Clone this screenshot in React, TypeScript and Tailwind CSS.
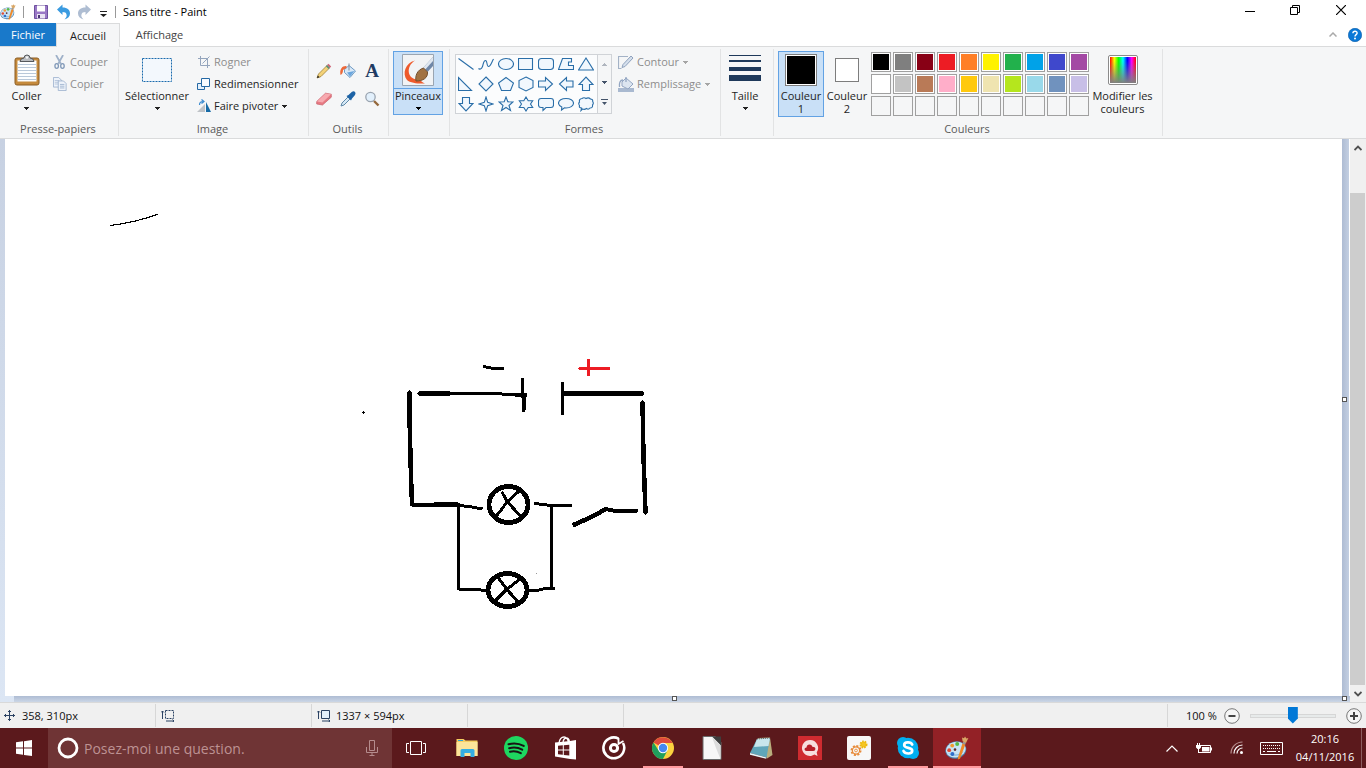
import React from "react";

type SvgProps = { children: React.ReactNode; box?: string; className?: string };

function Svg({ children, box = "0 0 16 16", className = "size-4" }: SvgProps) {
  return (
    <svg viewBox={box} className={`block shrink-0 ${className}`} fill="none" aria-hidden="true">
      {children}
    </svg>
  );
}

function Caret({ className = "text-[#222]" }: { className?: string }) {
  return (
    <Svg box="0 0 5 3" className={`h-[3px] w-[5px] ${className}`}>
      <path d="M0 0h5v1H4v1H3v1H2V2H1V1H0z" fill="currentColor" />
    </Svg>
  );
}

function Palette({ className }: { className: string }) {
  return (
    <Svg box="0 0 24 24" className={className}>
      <ellipse cx="10.8" cy="14" rx="10.6" ry="8.6" transform="rotate(-12 10.8 14)" fill="#4a7fa8" />
      <ellipse cx="10.8" cy="13.6" rx="9.9" ry="7.8" transform="rotate(-12 10.8 13.6)" fill="#c8e3f5" />
      <path d="M3 17c4 4 12 4 16-2-3 3-9 5-16 2z" fill="#85b9dd" />
      <circle cx="4.2" cy="14.2" r="1.9" fill="#e04a35" />
      <circle cx="7.2" cy="9.6" r="1.9" fill="#f29a2e" />
      <circle cx="12.2" cy="8" r="2" fill="#58b947" />
      <circle cx="7.4" cy="18" r="2" fill="#2f6fcb" />
      <circle cx="10" cy="13.6" r="1.3" fill="#5f2a2c" />
      <path d="M17.4 7.6l3 1-5.4 14.2-2.200.8.2-2.200z" fill="#ee8a2a" />
      <path d="M17.4 7.600l.8-2.200 2.800 1.200-.9 2.200z" fill="#9a9a9a" />
      <path d="M17.600 5.200l-.6-3.600 2 .6 1-1.800 1.400 2 2-.4-2.400 5z" fill="#d9a766" />
    </Svg>
  );
}

function Group({ label, width, children }: { label?: string; width: string; children: React.ReactNode }) {
  return (
    <section className={`flex h-[87px] shrink-0 flex-col border-r border-[#e2e3e4] ${width}`}>
      <div className="flex flex-1 items-start pt-[2px]">{children}</div>
      <h2 className="h-[14px] pr-[2px] text-center leading-[14px] text-[#5a5a5a]">{label}</h2>
    </section>
  );
}

function SmallButton({ icon, label, off, caret }: { icon: React.ReactNode; label: string; off?: boolean; caret?: boolean }) {
  return (
    <button
      type="button"
      disabled={off}
      className={`flex h-[22px] items-center gap-[3px] whitespace-nowrap ${off ? "text-[#8d8d8d]" : "text-[#1e1e1e]"}`}
    >
      {icon}
      <span>{label}</span>
      {caret && <Caret className={off ? "ml-px text-[#a5a5a5]" : "ml-px text-[#222]"} />}
    </button>
  );
}

function BigButton({ icon, label, width, caret }: { icon: React.ReactNode; label: string; width: string; caret?: boolean }) {
  return (
    <button type="button" className={`flex shrink-0 flex-col items-center text-[#1e1e1e] ${width}`}>
      <span className="flex h-[38px] items-center">{icon}</span>
      <span className="leading-[13px]">{label}</span>
      {caret && <Caret className="mt-[5px] text-[#222]" />}
    </button>
  );
}

const shapes: { name: string; d: string }[] = [
  { name: "Ligne", d: "M.5 2.5l15 11" },
  { name: "Courbe", d: "M.5 12.5c1 1 3 1 4-2s1-6 3-6 1 6 3 6 3-4 5-7.5" },
  { name: "Ellipse", d: "M8 2.5c4.2 0 7.5 2.5 7.5 5.5S12.2 13.5 8 13.5.5 11 .5 8 3.8 2.5 8 2.5z" },
  { name: "Rectangle", d: "M.5 2.5h14v11H.5z" },
  { name: "Rectangle arrondi", d: "M3.5 2.5h9q3 0 3 3v5q0 3-3 3h-9q-3 0-3-3v-5q0-3 3-3z" },
  { name: "Polygone", d: "M4.5 2.5h9v3.500h-3v3.500h5v4H.500z" },
  { name: "Triangle", d: "M8 2l7.5 12H.5z" },
  { name: "Triangle rectangle", d: "M.5 1.5v13h13z" },
  { name: "Losange", d: "M8 1l7 7-7 7-7-7z" },
  { name: "Pentagone", d: "M8 1.5l7.5 5.5-3 7.500h-9L.5 7z" },
  { name: "Hexagone", d: "M8 1l7 3.5v7L8 15l-7-3.5v-7z" },
  { name: "Flèche droite", d: "M.5 5h7V1.500L14.5 8l-7 6.5V11h-7z" },
  { name: "Flèche gauche", d: "M15 5H8.5V1.5L1.5 8l7 6.5V11H15z" },
  { name: "Flèche haut", d: "M4.500 14.5V8.5H1L8 1l7 7.500h-3.500v6z" },
  { name: "Flèche bas", d: "M4.500 1.5v6H1L8 15l7-7.500h-3.500v-6z" },
  { name: "Étoile à 4 branches", d: "M8 1l1.7 5.3L15 8 9.7 9.7 8 15 6.3 9.7 1 8l5.3-1.700z" },
  { name: "Étoile à 5 branches", d: "M8 1l1.8 4.8 5.2.2-4 3.5 1.5 5L8 11.5l-4.500 3 1.5-5L1 6l5.200-.2z" },
  { name: "Étoile à 6 branches", d: "M8 1l2.2 3.7h4.500L12.5 8l2.2 3.5h-4.500L8 15l-2.200-3.500H1.300L3.5 8 1.3 4.700h4.500z" },
  { name: "Légende rectangle", d: "M3 2.5h10q2.5 0 2.5 2.5v4q0 2.5-2.500 2.500H8l-3 3v-3H3Q.5 11.5.5 9V5Q.5 2.500 3 2.500z" },
  { name: "Légende ellipse", d: "M8 2.5c4.2 0 7.5 2 7.5 4.700S12.200 12 8 12l-1.500-.1L3.500 14l.3-3C1.700 10 .5 8.700.5 7.200.5 4.500 3.800 2.500 8 2.500z" },
  { name: "Légende nuage", d: "M4 2.500q2-1.500 4 0 2.500-1.500 4.500.5 2.500 0 2.200 2.500 1.300 2-.200 3.500.5 3-2.500 3-1.500 2-3.500.5-2 1.500-4 .5L3 14.500l.5-2.500Q.8 12 1.500 9.500 0 7.500 1.500 6 .800 3 4 2.500z" },
];

const colours: [string, string][] = [
  ["Noir", "bg-black"],
  ["Gris 50 %", "bg-[#7f7f7f]"],
  ["Rouge foncé", "bg-[#880015]"],
  ["Rouge", "bg-[#ed1c24]"],
  ["Orange", "bg-[#ff7f27]"],
  ["Jaune", "bg-[#fff200]"],
  ["Vert", "bg-[#22b14c]"],
  ["Turquoise", "bg-[#00a2e8]"],
  ["Indigo", "bg-[#3f48cc]"],
  ["Violet", "bg-[#a349a4]"],
  ["Blanc", "bg-white"],
  ["Gris 25 %", "bg-[#c3c3c3]"],
  ["Marron", "bg-[#b97a57]"],
  ["Rose", "bg-[#ffaec9]"],
  ["Or", "bg-[#ffc90e]"],
  ["Jaune clair", "bg-[#efe4b0]"],
  ["Citron vert", "bg-[#b5e61d]"],
  ["Turquoise clair", "bg-[#99d9ea]"],
  ["Bleu-gris", "bg-[#7092be]"],
  ["Lavande", "bg-[#c8bfe7]"],
];

function TitleBar() {
  return (
    <header className="flex h-[23px] shrink-0 items-center">
      <Palette className="size-4" />
      <span className="ml-[7px] h-3 w-px bg-[#999]" />
      <button type="button" aria-label="Enregistrer" className="ml-[9px]">
        <Svg>
          <path d="M1.500 1.500h13v13h-13z" fill="#9a78c6" stroke="#6d4f9e" />
          <path d="M4 1.500h8v6H4z" fill="#fff" />
          <path d="M4 10h8v4.500H4z" fill="#e9e3f3" />
          <path d="M5 11h2v3H5z" fill="#4b3775" />
        </Svg>
      </button>
      <button type="button" aria-label="Annuler" className="ml-[7px]">
        <Svg>
          <path d="M1 5.500L6.500.500v3c5 0 7.500 2.500 7.500 6 0 3-2 5-5.500 6 2-2 2.500-3.500 2-5-.500-1.800-1.500-2.500-4-2.500v3z" fill="#3a9be0" />
        </Svg>
      </button>
      <button type="button" aria-label="Rétablir" className="ml-[5px]">
        <Svg>
          <path d="M14 5.500L8.500.500v3c-5 0-7.500 2.500-7.500 6 0 3 2 5 5.500 6-2-2-2.500-3.500-2-5C5 8.700 6 8 8.500 8v3z" fill="#aebdd2" />
        </Svg>
      </button>
      <button type="button" aria-label="Personnaliser" className="ml-[7px] mt-1">
        <Svg box="0 0 7 6" className="h-[6px] w-[7px]">
          <path d="M0 0h7v1H0zM0 3h7L3.500 6z" fill="#222" />
        </Svg>
      </button>
      <span className="ml-2 h-3 w-px bg-[#999]" />
      <h1 className="ml-[7px] flex-1 whitespace-nowrap text-black">Sans titre - Paint</h1>
      <button type="button" aria-label="Réduire" className="flex h-full w-[46px] items-center justify-center">
        <Svg box="0 0 10 10" className="size-[10px]">
          <path d="M0 4.500h10" stroke="#000" />
        </Svg>
      </button>
      <button type="button" aria-label="Niveau inférieur" className="flex h-full w-11 items-center justify-center pb-[3px]">
        <Svg box="0 0 10 10" className="size-[10px]">
          <path d="M.5 2.500h7v7h-7zM2.500 2.500v-2h7v7h-2" stroke="#000" />
        </Svg>
      </button>
      <button type="button" aria-label="Fermer" className="flex h-full w-12 items-center justify-center pb-[3px]">
        <Svg box="0 0 10 10" className="size-[10px]">
          <path d="M0 0l10 10M10 0L0 10" stroke="#000" strokeWidth="1.200" />
        </Svg>
      </button>
      <span className="w-px" />
    </header>
  );
}

function Tabs() {
  return (
    <nav className="flex h-[24px] shrink-0 items-stretch border-b border-[#dadbdc]">
      <button type="button" className="w-[56px] bg-[#1979ca] text-white">
        Fichier
      </button>
      <button type="button" className="-mb-px w-[64px] border border-b-0 border-[#dadbdc] bg-[#f5f6f7] text-[#1e1e1e]">
        Accueil
      </button>
      <button type="button" className="w-[79px] text-[#444]">
        Affichage
      </button>
      <span className="flex-1" />
      <button type="button" aria-label="Réduire le ruban" className="mr-[11px]">
        <Svg box="0 0 8 5" className="h-[5px] w-2">
          <path d="M.5 4.500L4 1l3.500 3.500" stroke="#aaa" strokeWidth="1.500" />
        </Svg>
      </button>
      <button type="button" aria-label="Aide" className="mr-1 self-center">
        <Svg box="0 0 14 14" className="size-[14px]">
          <circle cx="7" cy="7" r="6.700" fill="#0a78d7" stroke="#0559a6" strokeWidth=".6" />
          <path d="M4.900 5.200c.1-2.700 4.300-2.500 4.200-.100C9 6.700 7 6.600 7 8.500" stroke="#fff" strokeWidth="1.400" />
          <circle cx="7" cy="10.500" r=".95" fill="#fff" />
        </Svg>
      </button>
    </nav>
  );
}

function Ribbon() {
  return (
    <div className="flex h-[92px] shrink-0 overflow-hidden border-b border-[#dadbdc] bg-[#f5f6f7] pt-[2px]">
      <Group label="Presse-papiers" width="w-[119px]">
        <BigButton
          width="w-[53px]"
          label="Coller"
          caret
          icon={
            <Svg box="0 0 26 32" className="h-8 w-[26px]">
              <rect x="1" y="4" width="24" height="27" rx="2" fill="#c58a3c" stroke="#8b5d24" />
              <path d="M3.500 6.500h19v21h-19z" fill="#fdfeff" />
              <path d="M3.500 10.500h19M3.500 13.500h19M3.500 16.500h19M3.500 19.500h19M3.500 22.500h19M3.500 25.500h19" stroke="#b9c8d9" />
              <path d="M6 7.500q0-3 4-3.500 0-3 3-3t3 3q4 .500 4 3.500z" fill="#b9bcc0" stroke="#55585c" />
              <circle cx="13" cy="3.500" r="1.200" fill="#f5f6f7" />
            </Svg>
          }
        />
        <div className="flex flex-col items-start">
          <SmallButton
            off
            label="Couper"
            icon={
              <Svg className="size-[14px]">
                <path d="M3.500 0l5.500 10M11.500 0L6 10" stroke="#9fb1c9" strokeWidth="2" />
                <ellipse cx="4.200" cy="12.500" rx="2" ry="2.700" stroke="#8199b8" strokeWidth="1.500" />
                <ellipse cx="10.800" cy="12.500" rx="2" ry="2.700" stroke="#8199b8" strokeWidth="1.500" />
              </Svg>
            }
          />
          <SmallButton
            off
            label="Copier"
            icon={
              <Svg className="size-[14px]">
                <path d="M.5.500h6l3 3v8h-9z" fill="#eef3fa" stroke="#9fb3cf" />
                <path d="M2 4h5M2 6h5M2 8h5" stroke="#b4c4da" />
                <path d="M6 4.500h6l3 3v8H6z" fill="#eef3fa" stroke="#9fb3cf" />
                <path d="M8 8.500h5M8 10.500h5M8 12.500h5" stroke="#9fb3cf" />
              </Svg>
            }
          />
        </div>
      </Group>

      <Group label="Image" width="w-[190px]">
        <BigButton
          width="w-[76px]"
          label="Sélectionner"
          caret
          icon={
            <Svg box="0 0 30 24" className="h-6 w-[30px]">
              <path d="M.5.500h29v23H.500z" fill="#f3f8fd" stroke="#1a6aad" strokeDasharray="2 1" />
            </Svg>
          }
        />
        <div className="ml-[2px] flex flex-col items-start">
          <SmallButton
            off
            label="Rogner"
            icon={
              <Svg box="0 0 14 14" className="size-[14px]">
                <path d="M3.500 1v9.500H13M1 3.500h9.500V13M12.500 1.500l-7 7" stroke="#94a5bd" />
              </Svg>
            }
          />
          <SmallButton
            label="Redimensionner"
            icon={
              <Svg box="0 0 14 14" className="size-[14px]">
                <path d="M.5 6.500h7v6h-7z" fill="#e4f0fb" stroke="#2468a4" />
                <path d="M4.500 1.500h8v8h-8z" fill="#f7fbff" stroke="#2468a4" />
              </Svg>
            }
          />
          <SmallButton
            label="Faire pivoter"
            caret
            icon={
              <Svg box="0 0 14 14" className="size-[14px]">
                <path d="M0 13L8 5v8z" fill="#bfc3c8" />
                <path d="M9 13V3l5 10z" fill="#176ba7" />
                <path d="M2.500 6q0-3.500 3.500-3.500M4.500.500l2.500 2-2.500 2" stroke="#3c8bd0" strokeWidth="1.200" />
              </Svg>
            }
          />
        </div>
      </Group>

      <Group label="Outils" width="w-[80px]">
        <div className="ml-[3px] mt-[6px] grid grid-cols-3">
          <button type="button" aria-label="Crayon" className="flex h-7 w-6 items-center justify-center">
            <Svg>
              <path d="M1 15l1.500-4L11 2.500l2.500 2.500-8.500 8.500z" fill="#f3d278" stroke="#a08036" strokeWidth=".8" />
              <path d="M11 2L12.500.800l2.700 2.700-1.400 1.400z" fill="#cf6679" />
              <path d="M9.800 3.200L11 2l2.800 2.800-1.200 1.200z" fill="#5c9179" />
              <path d="M1 15l.8-2.500 1.700 1.700z" fill="#222" />
            </Svg>
          </button>
          <button type="button" aria-label="Remplissage de couleur" className="flex h-7 w-6 items-center justify-center">
            <Svg>
              <path d="M4.500 6.500L9 2.500l6.500 5.500-5.500 6.500-5.500-5z" fill="#d8e8f7" stroke="#6f9ac4" />
              <path d="M9 .500v7" stroke="#7c8b9b" />
              <path d="M7 9.500l7.500-1.500-4.500 5.500z" fill="#6ba6dd" />
              <path d="M6.500 3C1.500 2.500-.5 7 .5 12q2.500-1 2.500-5l3.500-2z" fill="#ed6838" />
            </Svg>
          </button>
          <button type="button" aria-label="Texte" className="flex h-7 w-6 items-center justify-center font-['Liberation_Serif',serif] text-[19px] font-bold text-[#1f3b63]">
            A
          </button>
          <button type="button" aria-label="Gomme" className="flex h-7 w-6 items-center justify-center">
            <Svg>
              <path d="M.7 10.500L9.500 2.200l5.800 1v3L6.500 14l-5.800-1z" fill="#e77a83" stroke="#c9606c" strokeWidth=".7" />
              <path d="M1 10.500l8.600-8 5.400.8-8.500 8.200z" fill="#f7aab0" />
            </Svg>
          </button>
          <button type="button" aria-label="Sélecteur de couleurs" className="flex h-7 w-6 items-center justify-center">
            <Svg>
              <path d="M1 15l1-3 6-6 2 2-6 6z" fill="#d6e8f5" stroke="#5f89a8" />
              <path d="M6.500 5l2-1L12 .8q2-1 3 .2t0 3L12 7.500l-1 2z" fill="#1d63a6" />
            </Svg>
          </button>
          <button type="button" aria-label="Loupe" className="flex h-7 w-6 items-center justify-center">
            <Svg>
              <path d="M10 10l4.500 4.500" stroke="#94683d" strokeWidth="2.400" />
              <circle cx="6.500" cy="6" r="4.700" fill="#e2f0fc" stroke="#9aa4b0" strokeWidth="1.300" />
            </Svg>
          </button>
        </div>
      </Group>

      <Group width="w-[61px]">
        <button type="button" aria-pressed="true" className="ml-[4px] flex h-[64px] w-[50px] flex-col items-center border border-[#62a2e4] bg-[#c9e0f7] text-[#1e1e1e]">
          <span className="flex h-[37px] w-full shrink-0 items-center justify-center border-b border-[#62a2e4]">
            <Svg box="0 0 32 32" className="size-8">
              <path d="M.5.500h31v31H.5z" fill="#f1f3f5" stroke="#9aa5b1" />
              <path d="M13 6.500C3 9 0 20 5 26c3.500 3 12 4 18 3.500-3-1-4-3.500-8-4C6 25 3 13 13 6.500z" fill="#ee5a2c" />
              <path d="M31 3v9l-5.500 6-4.500-4z" fill="#6f87a8" />
              <path d="M31 3l-10 11 2 1.800L31 7z" fill="#dfe7f0" />
              <path d="M14 27c-1-5 1-11 7.500-13l4 4c.5 6-4.500 9-11.500 9z" fill="#a17242" stroke="#73502f" />
            </Svg>
          </span>
          <span className="leading-[13px]">Pinceaux</span>
          <Caret className="mt-[5px] text-black" />
        </button>
      </Group>

      <Group label="Formes" width="w-[271px]">
        <div className="ml-[5px] mt-[3px] flex h-[60px] w-[157px] shrink-0 border border-[#d0d3d7] bg-[#fbfcfd]">
          <div className="grid w-[140px] shrink-0 grid-cols-7 content-center">
            {shapes.map((s) => (
              <button key={s.name} type="button" aria-label={s.name} className="flex h-5 w-5 items-center justify-center">
                <Svg>
                  <path d={s.d} stroke="#2a6ea8" strokeWidth="1.100" fill={s.name === "Ligne" || s.name === "Courbe" ? "none" : "#f1f7fd"} />
                </Svg>
              </button>
            ))}
          </div>
          <div className="ml-px flex flex-1 flex-col items-center justify-around border-l border-[#d0d3d7] bg-[#f5f6f7]">
            <button type="button" aria-label="Ligne précédente">
              <Caret className="rotate-180 text-[#b0b6bf]" />
            </button>
            <button type="button" aria-label="Ligne suivante">
              <Caret className="text-[#44546a]" />
            </button>
            <button type="button" aria-label="Toutes les formes">
              <Svg box="0 0 7 6" className="h-[6px] w-[7px]">
                <path d="M0 0h7v1H0zM1 3h5L3.500 6z" fill="#44546a" />
              </Svg>
            </button>
          </div>
        </div>
        <div className="ml-[6px] flex flex-col items-start">
          <SmallButton
            off
            caret
            label="Contour"
            icon={
              <Svg>
                <path d="M10 2.500H.5v12h3" stroke="#a3b2c6" strokeWidth="1.200" />
                <path d="M4 13.500l1-3 8-8.500 2 2-8 8.500z" fill="#d5dfec" stroke="#8fa2bd" />
              </Svg>
            }
          />
          <SmallButton
            off
            caret
            label="Remplissage"
            icon={
              <Svg>
                <path d="M0 12h16v4H0z" fill="#a9b9d0" />
                <path d="M4 6l4-4 7 6-5 5-6-3z" fill="#dce5f0" stroke="#93a6c2" />
                <path d="M8 1v5M5 4C2 4 1 7 1.500 11" stroke="#93a6c2" strokeWidth="1.300" />
              </Svg>
            }
          />
        </div>
      </Group>

      <Group width="w-[53px]">
        <BigButton
          width="w-12"
          label="Taille"
          caret
          icon={
            <Svg box="0 0 32 26" className="mb-1 h-[26px] w-8">
              <path d="M0 0h32v1H0zM0 5h32v2H0zM0 12h32v4H0zM0 20h32v6H0z" fill="#1e395b" />
            </Svg>
          }
        />
      </Group>

      <Group label="Couleurs" width="w-[389px]">
        <button type="button" aria-pressed="true" className="ml-[4px] flex h-[66px] w-[46px] shrink-0 flex-col items-center border border-[#62a2e4] bg-[#c9e0f7] leading-[13px] text-[#1e1e1e]">
          <span className="mb-[2px] mt-[2px] size-8 shrink-0 border border-[#7d7d7d] bg-white p-px">
            <span className="block size-full bg-black" />
          </span>
          <span className="mt-px">
            Couleur
            <br />1
          </span>
        </button>
        <button type="button" className="flex h-[66px] w-[46px] shrink-0 flex-col items-center leading-[13px] text-[#1e1e1e]">
          <span className="mb-[6px] mt-[7px] size-6 shrink-0 border border-[#7d7d7d] bg-white" />
          <span className="mt-px">
            Couleur
            <br />2
          </span>
        </button>
        <div className="ml-px mt-px grid shrink-0 grid-cols-10 gap-[2px]">
          {colours.map(([name, bg]) => (
            <button key={name} type="button" aria-label={name} className="size-5 border border-[#a0a0a0] bg-white p-px">
              <span className={`block size-full ${bg}`} />
            </button>
          ))}
          {Array.from({ length: 10 }, (_, i) => (
            <button key={i} type="button" aria-label={`Couleur personnalisée ${i + 1}`} className="size-5 border border-[#a0a0a0] bg-[#f5f6f7]" />
          ))}
        </div>
        <button type="button" className="flex w-[67px] shrink-0 flex-col items-center leading-[13px] text-[#1e1e1e]">
          <span className="mb-[4px] mt-[4px] size-[30px] rounded-[2px] border border-[#8b8b8b] bg-white p-px">
            <span className="block size-full bg-[linear-gradient(to_bottom,#80808000_15%,#808080),linear-gradient(to_right,#f00,#ff0,#0f0,#0ff,#00f,#f0f,#f00)]" />
          </span>
          <span className="whitespace-nowrap">
            Modifier les
            <br />
            couleurs
          </span>
        </button>
      </Group>
    </div>
  );
}

function Drawing() {
  return (
    <svg viewBox="5 139 700 500" className="block h-[500px] w-[700px]" fill="none" stroke="#000" strokeLinecap="round" strokeLinejoin="round" shapeRendering="crispEdges" role="img" aria-label="Schéma électrique">
      <path d="M110.500 225.500q24-3 47-11" strokeWidth="1.200" />
      <path d="M362 412.500h3M363.500 411v3" strokeWidth="1" strokeLinecap="butt" />
      <path d="M484 366.500l9 2h9.500" strokeWidth="3" />
      <path d="M580 368.500h28.500M588.500 360.500v14" stroke="#ed1c24" strokeWidth="3" />
      <path d="M409.500 392.500V417l1.500 60 1 27" strokeWidth="4.500" />
      <path d="M412 504.500h22" strokeWidth="4" />
      <path d="M434 504h24" strokeWidth="5" strokeLinecap="butt" />
      <path d="M419.500 393.500H449" strokeWidth="4.500" />
      <path d="M449 393.800h50l27 1.700" strokeWidth="3" />
      <path d="M522.500 379v18" strokeWidth="3" />
      <path d="M523.500 396v14M517 395h8" strokeWidth="4" />
      <path d="M562.500 383v30.500" strokeWidth="3" />
      <path d="M564 393.500h78" strokeWidth="4.500" />
      <path d="M642.500 402.500l1 54 2 56" strokeWidth="4.500" />
      <path d="M574.500 524.500l17-7.500 13.500-7.500" strokeWidth="4.500" />
      <path d="M605 509l8 1.500h23.500" strokeWidth="4" />
      <path d="M458 505.500l12 1 7 1.500h5" strokeWidth="3" />
      <path d="M458.500 504v85h15l11 1.500" strokeWidth="3" />
      <path d="M535 503.500l16 2h19.500" strokeWidth="3" />
      <path d="M551.500 506v82.500h-6l-9 2h-8M551.500 588.500h2" strokeWidth="3" />
      <ellipse cx="508.500" cy="504.500" rx="19.500" ry="18" strokeWidth="4.800" />
      <path d="M502.500 493l5 9 13 14M518 492l-12 11-4 6-5 6" strokeWidth="3" />
      <ellipse cx="507.500" cy="590" rx="19.500" ry="16.500" strokeWidth="4.800" />
      <path d="M498 577.500l9 12 10.500 12M520 579l-14 11-10 10" strokeWidth="3" />
      <path d="M536 573.500h1" stroke="#999" strokeWidth="1" strokeLinecap="butt" />
    </svg>
  );
}

function Workspace() {
  return (
    <main className="flex min-h-0 flex-1">
      <div className="flex min-w-0 flex-1 flex-col bg-linear-to-b from-[#c7d1e2] to-[#dce6f4] pl-[5px]">
        <div className="flex min-h-0 flex-1">
          <div className="min-w-0 flex-1 overflow-hidden bg-white">
            <Drawing />
          </div>
          <div className="flex w-[8px] items-center border-r border-white bg-linear-to-r from-[#aebcd3] to-[#c3cfe2]">
            <span className="-mt-[36px] size-[5px] border border-[#555] bg-white" />
          </div>
        </div>
        <div className="ml-[9px] flex h-[6px] shrink-0 items-start bg-linear-to-b from-[#aebcd3] to-[#cbd6e6]">
          <span className="flex-1" />
          <span className="mr-2 size-[5px] border border-[#555] bg-white" />
          <span className="flex-1" />
          <span className="mr-[3px] size-[5px] border border-[#555] bg-white" />
        </div>
      </div>
      <div className="flex w-4 shrink-0 flex-col items-start bg-[#f0f0f0]">
        <button type="button" aria-label="Défiler vers le haut" className="flex h-[18px] w-[15px] items-center justify-center">
          <Svg box="0 0 8 6" className="h-[6px] w-2">
            <path d="M.5 5L4 1.500 7.500 5" stroke="#505050" strokeWidth="1.800" />
          </Svg>
        </button>
        <span className="h-9 shrink-0" />
        <span className="w-[15px] flex-1 bg-[#cdcdcd]" />
        <button type="button" aria-label="Défiler vers le bas" className="flex h-[17px] w-[15px] items-center justify-center">
          <Svg box="0 0 8 6" className="h-[6px] w-2">
            <path d="M.5 1L4 4.500 7.500 1" stroke="#505050" strokeWidth="1.800" />
          </Svg>
        </button>
      </div>
    </main>
  );
}

function StatusBar() {
  return (
    <footer className="flex h-[26px] shrink-0 items-stretch border-t border-[#d9d9d9] bg-[#f0f0f0] py-px text-[#111]">
      <div className="flex w-[156px] items-center gap-[7px] border-r border-[#d7d7d7] pl-[4px]">
        <Svg box="0 0 11 11" className="size-[11px]">
          <path d="M5.500 0v11M0 5.500h11M4 2l1.500-1.500L7 2M4 9l1.500 1.500L7 9M2 4L.5 5.500 2 7M9 4l1.500 1.500L9 7" stroke="#2b4263" />
        </Svg>
        <span>358, 310px</span>
      </div>
      <div className="flex w-[156px] items-center border-r border-[#d7d7d7] pl-[5px]">
        <Svg box="0 0 13 12" className="h-3 w-[13px]">
          <path d="M1.500 1v8M0 2.500L1.500 1 3 2.500M5 11h8M11.500 9.500L13 11l-1.500 1" stroke="#2b4263" />
          <path d="M4.500.500h8v8h-8z" stroke="#2b4263" strokeDasharray="2 1" />
        </Svg>
      </div>
      <div className="flex w-[156px] items-center gap-[6px] border-r border-[#d7d7d7] pl-[5px]">
        <Svg box="0 0 13 12" className="h-3 w-[13px]">
          <path d="M1.500 1v8M0 2.500L1.500 1 3 2.500M5 11h8M11.500 9.500L13 11l-1.500 1" stroke="#2b4263" />
          <path d="M4.500.500h8v8h-8z" fill="#e3f0fb" stroke="#2b4263" />
        </Svg>
        <span>1337 × 594px</span>
      </div>
      <div className="w-[156px] border-r border-[#d7d7d7]" />
      <div className="flex-1" />
      <div className="flex w-[199px] items-center border-l border-[#d7d7d7] pl-[18px]">
        <label htmlFor="zoom" className="whitespace-nowrap">
          100 %
        </label>
        <button type="button" aria-label="Zoom arrière" className="ml-[7px]">
          <Svg>
            <circle cx="8" cy="8" r="7.300" fill="#f6f6f6" stroke="#777" />
            <path d="M4.500 8h7" stroke="#444" strokeWidth="2" />
          </Svg>
        </button>
        <input
          id="zoom"
          type="range"
          min="0"
          max="100"
          defaultValue="50"
          className="mx-[10px] h-[17px] w-[86px] appearance-none bg-transparent [&::-webkit-slider-runnable-track]:h-[4px] [&::-webkit-slider-runnable-track]:border [&::-webkit-slider-runnable-track]:border-[#d6d6d6] [&::-webkit-slider-runnable-track]:bg-[#e7eaea] [&::-webkit-slider-thumb]:-mt-[8px] [&::-webkit-slider-thumb]:h-[17px] [&::-webkit-slider-thumb]:w-[10px] [&::-webkit-slider-thumb]:appearance-none [&::-webkit-slider-thumb]:bg-[#0078d7] [&::-webkit-slider-thumb]:[clip-path:polygon(0_0,100%_0,100%_70%,50%_100%,0_70%)]"
        />
        <button type="button" aria-label="Zoom avant">
          <Svg>
            <circle cx="8" cy="8" r="7.300" fill="#f6f6f6" stroke="#777" />
            <path d="M4 8h8M8 4v8" stroke="#444" strokeWidth="2" />
          </Svg>
        </button>
      </div>
    </footer>
  );
}

const apps: { name: string; state?: "open" | "active"; icon: React.ReactNode }[] = [
  {
    name: "Affichage des tâches",
    icon: (
      <Svg box="0 0 20 16" className="mr-1 h-4 w-5">
        <path d="M4.500 1.500h11v13h-11zM3 3.500H.500v9H3M17 3.500h2.500v9H17" stroke="#fff" />
      </Svg>
    ),
  },
  {
    name: "Explorateur de fichiers",
    icon: (
      <Svg box="0 0 24 24" className="size-6">
        <path d="M1.500 3h7l2 1.500h12V20h-21z" fill="#f6cf62" />
        <path d="M1.500 6h21v14h-21z" fill="#fde49a" />
        <path d="M5.500 21v-6.500q0-1.500 1.500-1.500h11q1.500 0 1.500 1.500V21h-4v-4H9.500v4z" fill="#35aee3" />
        <path d="M3 4.500h5" stroke="#2aa5dc" />
      </Svg>
    ),
  },
  {
    name: "Spotify",
    icon: (
      <Svg box="0 0 24 24" className="size-6">
        <circle cx="12" cy="12" r="12" fill="#1ed760" />
        <path d="M4.500 8.300q8-2.300 15.200 1.600M5.200 12.200q7-1.900 13 1.500M6 15.800q5.600-1.400 10.800 1.400" stroke="#191414" strokeWidth="2" strokeLinecap="round" />
      </Svg>
    ),
  },
  {
    name: "Store",
    icon: (
      <Svg box="0 0 24 24" className="size-6">
        <path d="M2 6.500L17 5l6-1v19.500L17 23 2 20.500z" fill="#fff" />
        <path d="M6 7q1-6 5-6 3.500 0 4.500 5.500M10 6.500q.5-4.500 3.500-4.500 2.500 0 3 4" stroke="#fff" strokeWidth="1.300" />
        <path d="M5 9.700l4.800-.4v4.200H5zM10.800 9.200l5.500-.5v4.800h-5.500zM5 14.500h4.800v4.200L5 18.200zM10.800 14.500h5.500v5l-5.500-.6z" fill="#5b191c" />
      </Svg>
    ),
  },
  {
    name: "Groove Musique",
    icon: (
      <Svg box="0 0 24 24" className="size-6">
        <path d="M16.500 2.600A10.400 10.400 0 1 0 21 7" stroke="#fff" strokeWidth="2.600" />
        <circle cx="12" cy="12" r="3.600" stroke="#fff" strokeWidth="3" />
        <path d="M16.500 2v6l5-3" stroke="#fff" strokeWidth="1.800" />
      </Svg>
    ),
  },
  {
    name: "Google Chrome",
    state: "open",
    icon: (
      <Svg box="0 0 24 24" className="size-[22px]">
        <circle cx="12" cy="12" r="12" fill="#fbd23f" />
        <path d="M12 12L1.600 6A12 12 0 0 1 22.400 6.500H12z" fill="#df4a3c" />
        <path d="M1.600 6A12 12 0 0 0 12 24l4.800-9.300L12 12 7 14.500z" fill="#20a05d" />
        <circle cx="12" cy="12" r="5.600" fill="#fff" />
        <circle cx="12" cy="12" r="4.600" fill="#4688f1" />
      </Svg>
    ),
  },
  {
    name: "LibreOffice",
    icon: (
      <Svg box="0 0 24 24" className="size-6">
        <path d="M3 .500h12l6 6v17H3z" fill="#f7f7f7" stroke="#6b6b6b" />
        <path d="M12 .500h9v9z" fill="#3e3e3e" />
        <path d="M12 1l8.500 8.500V23L16 12z" fill="#dcdcdc" />
      </Svg>
    ),
  },
  {
    name: "Bloc-notes",
    icon: (
      <Svg box="0 0 24 24" className="size-6">
        <path d="M9 2l12-.5L23.500 19 18 22.500z" fill="#b9ae7e" />
        <path d="M8 3l13-1-3.500 19.500L1 17z" fill="#5fa6ba" />
        <path d="M8 3l13-1-1.500 8L5 11z" fill="#c8e6ec" />
        <path d="M1 17l16.500 4.500-.3 1.300L1 18.800z" fill="#e8f7fa" />
        <path d="M8 3l13-1" stroke="#666" strokeDasharray="1 1" />
      </Svg>
    ),
  },
  {
    name: "Cloud",
    icon: (
      <Svg box="0 0 24 24" className="size-6">
        <path d="M0 0h24v24H0z" fill="#cf2b30" />
        <path d="M12 4a8 8 0 1 0 4.500 14.600L19.500 20l-.8-3.500A8 8 0 0 0 12 4z" fill="#f7dede" />
        <path d="M8.500 15q-2 0-2-1.800t2-1.800q.3-2.900 3-2.900 2.300 0 2.900 2.200 3 0 3 2.200 0 2.100-2.200 2.100z" fill="#b61f29" />
      </Svg>
    ),
  },
  {
    name: "Paramètres",
    icon: (
      <Svg box="0 0 24 24" className="size-6">
        <rect width="24" height="24" rx="2" fill="#f7f7f7" />
        <circle cx="9" cy="14.500" r="4.500" stroke="#e78b3b" strokeWidth="2" strokeDasharray="2 1.500" />
        <circle cx="9" cy="14.500" r="3.600" stroke="#e78b3b" strokeWidth="1.200" />
        <circle cx="9" cy="14.500" r="1.400" stroke="#e78b3b" strokeWidth=".9" />
        <circle cx="16.500" cy="8.500" r="3" fill="#f5c623" stroke="#edb90f" strokeWidth="2" strokeDasharray="1.500 1" />
      </Svg>
    ),
  },
  {
    name: "Skype",
    state: "open",
    icon: (
      <Svg box="0 0 24 24" className="size-6">
        <circle cx="12" cy="12" r="10.300" fill="#00aff0" />
        <circle cx="7" cy="7" r="6" fill="#00aff0" />
        <circle cx="17" cy="17" r="6" fill="#00aff0" />
        <path d="M16.200 8.500c-1.200-3-8-3-8 .4 0 4 8 2 8 5.800 0 3.700-7.200 3.600-8.700.300" stroke="#fff" strokeWidth="2.700" strokeLinecap="round" />
      </Svg>
    ),
  },
  { name: "Paint", state: "active", icon: <Palette className="size-6" /> },
];

function Taskbar() {
  return (
    <div className="flex h-10 shrink-0 items-stretch bg-[#5b191c] text-white">
      <button type="button" aria-label="Démarrer" className="flex w-12 items-center justify-center">
        <Svg>
          <path d="M0 2.300L7 1.300v6.300H0zM8 1.200L16 0v7.600H8zM0 8.500h7v6.300l-7-1zM8 8.500h8V16l-8-1.100z" fill="#fff" />
        </Svg>
      </button>
      <form className="flex w-[344px] items-center bg-[#6f3435] pl-[9px] pr-[14px]" onSubmit={(e) => e.preventDefault()}>
        <Svg box="0 0 22 22" className="size-[22px]">
          <circle cx="11" cy="11" r="9" stroke="#fff" strokeWidth="2.800" />
        </Svg>
        <input aria-label="Recherche" placeholder="Posez-moi une question." className="ml-[5px] mt-px min-w-0 flex-1 bg-transparent text-[14px] text-white outline-none placeholder:text-[#bd9293]" />
        <button type="button" aria-label="Recherche vocale">
          <Svg box="0 0 12 16" className="h-4 w-3">
            <path d="M3.500.500h5v10h-5zM.5 7v5.500h11V7M6 12.500v3M3.500 15.500h5" stroke="#b58c8d" />
          </Svg>
        </button>
      </form>
      <nav className="ml-[2px] flex flex-1 gap-px">
        {apps.map((a) => (
          <button
            key={a.name}
            type="button"
            aria-label={a.name}
            className={`flex w-12 shrink-0 flex-col items-center ${a.state === "active" ? "bg-[#932126]" : ""}`}
          >
            <span className="flex h-[38px] items-center pt-[2px]">{a.icon}</span>
            {a.state === "open" && <span className="h-[2px] w-10 bg-[#ff9a9e]" />}
            {a.state === "active" && <span className="h-[2px] w-full bg-[#ff9a9e]" />}
          </button>
        ))}
      </nav>
      <div className="flex items-center">
        <button type="button" aria-label="Icônes cachées" className="flex w-8 justify-center">
          <Svg box="0 0 12 7" className="h-[7px] w-3">
            <path d="M.5 6.500L6 1l5.500 5.500" stroke="#fff" strokeWidth="1.200" />
          </Svg>
        </button>
        <button type="button" aria-label="Batterie" className="flex w-8 justify-center">
          <Svg box="0 0 16 12" className="h-3 w-4">
            <path d="M5 3.500h9.500v7H5" stroke="#fff" />
            <path d="M6 5h7.500v4.500H6zM15 5.500h1v3h-1zM0 3h5v2.500L3.500 7h-2L0 5.500zM1 1h1v2H1zM3 1h1v2H3zM2 7h1v4H2zM2 10h3v1H2z" fill="#fff" />
          </Svg>
        </button>
        <button type="button" aria-label="Wi-Fi" className="flex w-[34px] justify-center">
          <Svg box="0 0 14 14" className="size-[14px]">
            <path d="M1 12.500A11.500 11.500 0 0 1 12.500 1" stroke="#b78f90" strokeWidth="1.200" />
            <path d="M4 12.500A8.500 8.500 0 0 1 12.500 4M7 12.500A5.500 5.500 0 0 1 12.500 7" stroke="#fff" strokeWidth="1.200" />
            <circle cx="11.500" cy="11.500" r="1.500" fill="#fff" />
          </Svg>
        </button>
        <button type="button" aria-label="Clavier tactile" className="flex w-[35px] justify-center">
          <Svg box="0 0 23 13" className="h-[13px] w-[23px]">
            <path d="M.5.500h22v12H.5z" stroke="#fff" />
            <path d="M3 3.500h18M3 6.500h18" stroke="#fff" strokeDasharray="1 1" />
            <path d="M3 9.500h2M7 9.500h9M18 9.500h2" stroke="#fff" />
          </Svg>
        </button>
        <time dateTime="2016-11-04T20:16" className="w-[72px] text-center leading-[18px]">
          20:16
          <br />
          04/11/2016
        </time>
      </div>
      <span className="mr-[4px] w-px bg-[#8c5d5f]" />
    </div>
  );
}

export default function App() {
  return (
    <div className="flex h-screen min-h-[480px] flex-col overflow-hidden bg-white font-['Open_Sans','Noto_Sans',sans-serif] text-[11px] leading-4">
      <TitleBar />
      <Tabs />
      <Ribbon />
      <Workspace />
      <StatusBar />
      <Taskbar />
    </div>
  );
}
